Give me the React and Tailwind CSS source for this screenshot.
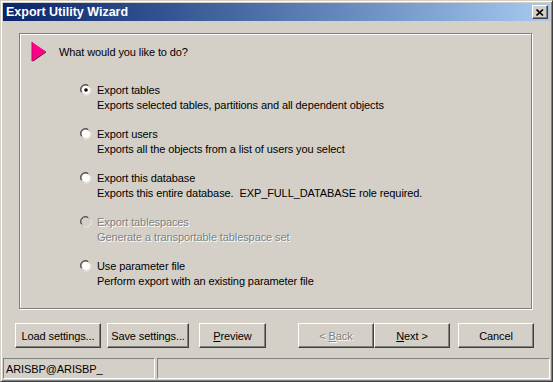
import React from 'react';

const font = { fontFamily: '"Liberation Sans", Arial, sans-serif' };

const Radio = ({ checked, disabled }) => (
  <svg width="12" height="12" viewBox="0 0 12 12" className="shrink-0">
    <path d="M1 8 A5.5 5.5 0 0 1 8 1" stroke="#808080" strokeWidth="1" fill="none" />
    <path d="M2 8.5 A4.5 4.5 0 0 1 8.5 2" stroke="#404040" strokeWidth="1" fill="none" />
    <path d="M4 11 A5.5 5.5 0 0 0 11 4" stroke="#ffffff" strokeWidth="1" fill="none" />
    <path d="M3.5 10 A4.5 4.5 0 0 0 10 3.5" stroke="#d4d0c8" strokeWidth="1" fill="none" />
    <circle cx="6" cy="6" r="4" fill={disabled ? '#d4d0c8' : '#ffffff'} />
    {checked && <circle cx="6" cy="6" r="1.8" fill="#000" />}
  </svg>
);

const Option = ({ title, desc, checked, disabled }) => (
  <div className="flex flex-col">
    <div className="flex items-center gap-[5px]">
      <Radio checked={checked} disabled={disabled} />
      <span className={disabled ? 'text-[#808080] [text-shadow:1px_1px_#fff]' : 'text-black'}>{title}</span>
    </div>
    <div className={'pl-[17px] mt-[1px] whitespace-pre ' + (disabled ? 'text-[#808080] [text-shadow:1px_1px_#fff]' : 'text-black')}>{desc}</div>
  </div>
);

const Btn = ({ children, w, disabled, className = '' }) => (
  <div
    className={`h-[25px] flex items-center justify-center whitespace-nowrap bg-[#d4d0c8] border border-t-white border-l-white border-r-[#404040] border-b-[#404040] shadow-[inset_-1px_-1px_#808080] ${className} ${disabled ? 'text-[#808080] [text-shadow:1px_1px_#fff]' : 'text-black'}`}
    style={{ width: w }}
  >
    {children}
  </div>
);

export default function App() {
  return (
    <div className="w-[553px] h-[382px] bg-[#d4d0c8] text-[11px] leading-[14px] tracking-[-0.1px] overflow-hidden" style={font}>
      <div className="w-full h-full flex flex-col border border-t-[#d4d0c8] border-l-[#d4d0c8] border-r-[#404040] border-b-[#404040] shadow-[inset_1px_1px_#fff,inset_-1px_-1px_#808080] p-[2px]">
        {/* Title bar */}
        <div className="h-[18px] flex items-center justify-between bg-gradient-to-r from-[#0a246a] to-[#a6caf0] pl-[3px] pr-[2px]">
          <span className="text-white font-bold text-[12.5px] tracking-[0px]">Export Utility Wizard</span>
          <div className="w-[16px] h-[14px] bg-[#d4d0c8] border border-t-white border-l-white border-r-[#404040] border-b-[#404040] shadow-[inset_-1px_-1px_#808080] flex items-center justify-center">
            <svg width="8" height="7" viewBox="0 0 8 7">
              <path d="M0.5 0.5 L7 6.5 M7 0.5 L0.5 6.5" stroke="#000" strokeWidth="1.6" />
            </svg>
          </div>
        </div>

        {/* Group box */}
        <div className="ml-[16px] mt-[12px] w-[513px] h-[276px] border border-[#808080] shadow-[1px_1px_#fff,inset_1px_1px_#fff]">
          <div className="flex items-center pl-[11px] pt-[7px]">
            <svg width="16" height="21" viewBox="0 0 16 21">
              <path d="M1 1 L15 10.5 L1 20 Z" fill="#ff0088" />
              <path d="M1 20 L15 10.5 L15 11.5 L2 20.5 Z" fill="#600030" />
              <path d="M1 1 L1 20" stroke="#c00060" strokeWidth="1" />
            </svg>
            <span className="ml-[12px]">What would you like to do?</span>
          </div>
          <div className="flex flex-col gap-[15px] pl-[60px] pt-[21px]">
            <Option checked title="Export tables" desc="Exports selected tables, partitions and all dependent objects" />
            <Option title="Export users" desc="Exports all the objects from a list of users you select" />
            <Option title="Export this database" desc="Exports this entire database.  EXP_FULL_DATABASE role required." />
            <Option disabled title="Export tablespaces" desc="Generate a transportable tablespace set" />
            <Option title="Use parameter file" desc="Perform export with an existing parameter file" />
          </div>
        </div>

        {/* Buttons */}
        <div className="flex items-center mt-[14px] pl-[12px]">
          <Btn w={86}>Load settings...</Btn>
          <Btn w={82} className="ml-[6px]">Save settings...</Btn>
          <Btn w={67} className="ml-[10px]">
            <span><u>P</u>review</span>
          </Btn>
          <Btn w={76} disabled className="ml-[32px]">
            <span>&lt; <u>B</u>ack</span>
          </Btn>
          <Btn w={76}>
            <span><u>N</u>ext &gt;</span>
          </Btn>
          <Btn w={76} className="ml-[8px]">Cancel</Btn>
        </div>

        {/* Status bar */}
        <div className="mt-auto flex h-[21px] gap-[2px]">
          <div className="w-[152px] border border-t-[#808080] border-l-[#808080] border-r-white border-b-white flex items-center pl-[2px]">
            ARISBP@ARISBP_
          </div>
          <div className="flex-1 border border-t-[#808080] border-l-[#808080] border-r-white border-b-white" />
        </div>
      </div>
    </div>
  );
}
